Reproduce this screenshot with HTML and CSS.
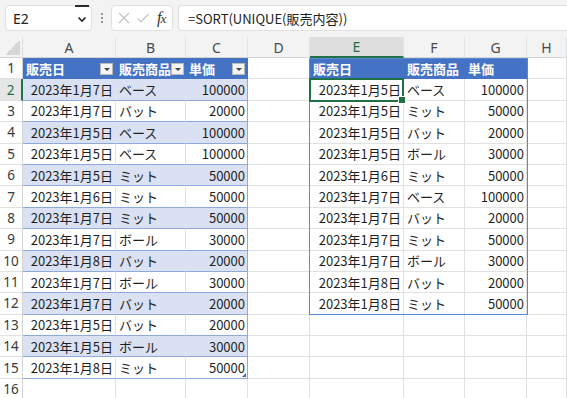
FILE: index.html
```html
<!DOCTYPE html>
<html lang="ja">
<head>
<meta charset="utf-8">
<title>Sheet</title>
<link rel="stylesheet" href="styles.css">
</head>
<body>
<div class="toolbar">
  <div class="namebox">
    <span class="nb-text">E2</span>
    <span class="nb-btn"><svg width="12" height="12" viewBox="0 0 12 12"><path d="M2.5 4.5 L6 8 L9.5 4.5" fill="none" stroke="#222" stroke-width="1.6"/></svg></span>
  </div>
  <div class="dots"><svg width="4" height="12" viewBox="0 0 4 12"><circle cx="2" cy="2" r="1" fill="#7a7a7a"/><circle cx="2" cy="6" r="1" fill="#7a7a7a"/><circle cx="2" cy="10" r="1" fill="#7a7a7a"/></svg></div>
  <div class="fxbox">
    <svg class="ico" width="14" height="14" viewBox="0 0 14 14"><path d="M2 2 L12 12 M12 2 L2 12" stroke="#c4c4c4" stroke-width="1.2"/></svg>
    <svg class="ico" width="14" height="14" viewBox="0 0 14 14"><path d="M1.5 7.5 L5 11 L12.5 3" fill="none" stroke="#c4c4c4" stroke-width="1.2"/></svg>
    <span class="fx">f<span class="fx-x">x</span></span>
  </div>
  <div class="formula">=SORT(UNIQUE(販売内容))</div>
</div>

<div class="sheet">
  <div class="corner"></div>
  <div class="ch">A</div><div class="ch">B</div><div class="ch">C</div><div class="ch">D</div><div class="ch sel">E</div><div class="ch">F</div><div class="ch">G</div><div class="ch">H</div>

  <div class="rh">1</div>
  <div class="c h"><span>販売日</span><span class="fb"></span></div>
  <div class="c h"><span>販売商品</span><span class="fb"></span></div>
  <div class="c h"><span>単価</span><span class="fb"></span></div>
  <div class="c"></div>
  <div class="c h">販売日</div><div class="c h">販売商品</div><div class="c h">単価</div><div class="c"></div>

  <div class="rh sel">2</div>
  <div class="c r b">2023年1月7日</div><div class="c b">ベース</div><div class="c r b e">100000</div><div class="c"></div>
  <div class="c r">2023年1月5日</div><div class="c">ベース</div><div class="c r">100000</div><div class="c"></div>

  <div class="rh">3</div>
  <div class="c r w">2023年1月7日</div><div class="c w">バット</div><div class="c r w e">20000</div><div class="c"></div>
  <div class="c r">2023年1月5日</div><div class="c">ミット</div><div class="c r">50000</div><div class="c"></div>

  <div class="rh">4</div>
  <div class="c r b">2023年1月5日</div><div class="c b">ベース</div><div class="c r b e">100000</div><div class="c"></div>
  <div class="c r">2023年1月5日</div><div class="c">バット</div><div class="c r">20000</div><div class="c"></div>

  <div class="rh">5</div>
  <div class="c r w">2023年1月5日</div><div class="c w">ベース</div><div class="c r w e">100000</div><div class="c"></div>
  <div class="c r">2023年1月5日</div><div class="c">ボール</div><div class="c r">30000</div><div class="c"></div>

  <div class="rh">6</div>
  <div class="c r b">2023年1月5日</div><div class="c b">ミット</div><div class="c r b e">50000</div><div class="c"></div>
  <div class="c r">2023年1月6日</div><div class="c">ミット</div><div class="c r">50000</div><div class="c"></div>

  <div class="rh">7</div>
  <div class="c r w">2023年1月6日</div><div class="c w">ミット</div><div class="c r w e">50000</div><div class="c"></div>
  <div class="c r">2023年1月7日</div><div class="c">ベース</div><div class="c r">100000</div><div class="c"></div>

  <div class="rh">8</div>
  <div class="c r b">2023年1月7日</div><div class="c b">ミット</div><div class="c r b e">50000</div><div class="c"></div>
  <div class="c r">2023年1月7日</div><div class="c">バット</div><div class="c r">20000</div><div class="c"></div>

  <div class="rh">9</div>
  <div class="c r w">2023年1月7日</div><div class="c w">ボール</div><div class="c r w e">30000</div><div class="c"></div>
  <div class="c r">2023年1月7日</div><div class="c">ミット</div><div class="c r">50000</div><div class="c"></div>

  <div class="rh">10</div>
  <div class="c r b">2023年1月8日</div><div class="c b">バット</div><div class="c r b e">20000</div><div class="c"></div>
  <div class="c r">2023年1月7日</div><div class="c">ボール</div><div class="c r">30000</div><div class="c"></div>

  <div class="rh">11</div>
  <div class="c r w">2023年1月7日</div><div class="c w">ボール</div><div class="c r w e">30000</div><div class="c"></div>
  <div class="c r">2023年1月8日</div><div class="c">バット</div><div class="c r">20000</div><div class="c"></div>

  <div class="rh">12</div>
  <div class="c r b">2023年1月7日</div><div class="c b">バット</div><div class="c r b e">20000</div><div class="c"></div>
  <div class="c r">2023年1月8日</div><div class="c">ミット</div><div class="c r">50000</div><div class="c"></div>

  <div class="rh">13</div>
  <div class="c r w">2023年1月5日</div><div class="c w">バット</div><div class="c r w e">20000</div><div class="c"></div>
  <div class="c"></div><div class="c"></div><div class="c"></div><div class="c"></div>

  <div class="rh">14</div>
  <div class="c r b">2023年1月5日</div><div class="c b">ボール</div><div class="c r b e">30000</div><div class="c"></div>
  <div class="c"></div><div class="c"></div><div class="c"></div><div class="c"></div>

  <div class="rh">15</div>
  <div class="c r w">2023年1月8日</div><div class="c w">ミット</div><div class="c r w e last">50000</div><div class="c"></div>
  <div class="c"></div><div class="c"></div><div class="c"></div><div class="c"></div>

  <div class="rh">16</div>
  <div class="c"></div><div class="c"></div><div class="c"></div><div class="c"></div>
  <div class="c"></div><div class="c"></div><div class="c"></div><div class="c"></div>

  <div class="spill"></div>
  <div class="cursor"></div>
</div>
</body>
</html>
```

FILE: styles.css
```css
* { box-sizing: border-box; }
html, body { margin: 0; padding: 0; }
body {
  width: 567px;
  height: 398px;
  overflow: hidden;
  background: #ffffff;
  font-family: "Noto Sans CJK JP", "Noto Sans", sans-serif;
  color: #1f1f1f;
}

/* toolbar */
.toolbar {
  height: 37px;
  background: #f3f3f3;
  display: flex;
  align-items: flex-start;
  padding: 5px 0 0 5px;
}
.namebox {
  width: 87px;
  height: 26px;
  background: #fff;
  border: 1px solid #e0e0e0;
  border-radius: 4px;
  display: flex;
  align-items: center;
  justify-content: space-between;
  padding: 0 2px 0 7px;
}
.nb-text {
  font-family: "Noto Sans", sans-serif;
  font-size: 14px;
  color: #222;
}
.nb-btn {
  width: 14px;
  height: 25px;
  display: flex;
  align-items: center;
  justify-content: center;
  border-top: 2px solid #2b2b2b;
  margin-top: -1px;
}
.dots {
  width: 19px;
  height: 26px;
  display: flex;
  align-items: center;
  justify-content: center;
}
.fxbox {
  width: 62px;
  height: 26px;
  background: #fff;
  border: 1px solid #e0e0e0;
  border-radius: 4px;
  display: flex;
  align-items: center;
  padding: 0 3px 0 5px;
  gap: 5px;
}
.fx {
  font-family: "Liberation Serif", serif;
  font-style: italic;
  font-size: 16px;
  color: #333;
  margin-left: 2px;
  letter-spacing: -1px;
}
.fx-x { font-size: 13px; }
.formula {
  flex: 1;
  height: 26px;
  margin-left: 5px;
  background: #fff;
  border: 1px solid #e0e0e0;
  border-right: none;
  border-radius: 4px 0 0 4px;
  display: flex;
  align-items: center;
  padding-left: 9px;
  font-size: 13px;
  color: #222;
}

/* sheet grid */
.sheet {
  position: relative;
  display: grid;
  grid-template-columns: 23px 93px 70px 62px 62px 94px 61px 62px 40px;
  grid-template-rows: 21px repeat(16, 21.4px);
}
.corner {
  background: #f3f3f3 linear-gradient(135deg, transparent 50%, #d6d6d6 50%) no-repeat right 2px bottom 2px / 15px 15px;
  border-right: 1px solid #dcdcdc;
  border-bottom: 1px solid #d4d4d4;
}
.ch {
  background: #f3f3f3;
  border-right: 1px solid #e2e2e2;
  border-bottom: 1px solid #d4d4d4;
  display: flex;
  align-items: center;
  justify-content: center;
  font-family: "Noto Sans", sans-serif;
  font-size: 14px;
  color: #4a4a4a;
}
.ch.sel {
  background: #dedede;
  color: #1e7145;
  border-bottom: 2px solid #1e7145;
}
.rh {
  background: #fff;
  border-right: 1px solid #d4d4d4;
  border-bottom: 1px solid #e1e1e1;
  display: flex;
  align-items: center;
  justify-content: center;
  font-family: "Noto Sans", sans-serif;
  font-size: 13.5px;
  color: #3a3a3a;
}
.rh.sel {
  background: #e6e6e6;
  color: #1e7145;
  border-right: 2px solid #1e7145;
}

.c {
  position: relative;
  border-right: 1px solid #e1e1e1;
  border-bottom: 1px solid #e1e1e1;
  display: flex;
  align-items: center;
  padding: 0 3px;
  font-size: 13px;
  white-space: nowrap;
  overflow: hidden;
}
.c.r { justify-content: flex-end; padding-right: 2px; }
.c.h {
  background: #4472c4;
  color: #fff;
  font-weight: 700;
  border-right-color: #4472c4;
  border-bottom-color: #4472c4;
}
.c.b {
  background: #d9e1f2;
  border-right-color: #d9e1f2;
  border-bottom-color: #8ea9db;
}
.c.w { border-bottom-color: #8ea9db; }
.c.e { border-right-color: #8ea9db; }
.c.last { overflow: visible; }
.c.last::after {
  content: "";
  position: absolute;
  right: 1px;
  bottom: 1px;
  width: 0;
  height: 0;
  border-left: 4px solid transparent;
  border-bottom: 4px solid #3b66b8;
}

.fb {
  margin-left: auto;
  width: 13px;
  height: 12px;
  margin-top: 2px;
  margin-right: -1px;
  background: #f4f4f4;
  border: 1px solid #b9b9b9;
  display: flex;
  align-items: center;
  justify-content: center;
  flex-shrink: 0;
}
.fb::before {
  content: "";
  width: 0;
  height: 0;
  border-left: 3px solid transparent;
  border-right: 3px solid transparent;
  border-top: 3px solid #444;
}

/* overlays placed on grid areas */
.spill {
  position: absolute;
  grid-column: 6 / 9;
  grid-row: 2 / 14;
  top: 0;
  bottom: 0;
  left: -1px;
  right: -1px;
  border: 1px solid #5a8ad6;
  pointer-events: none;
}
.cursor {
  position: absolute;
  grid-column: 6 / 7;
  grid-row: 3 / 4;
  top: -1px;
  bottom: -1px;
  left: -1px;
  right: 0;
  border: 2px solid #1e7145;
  pointer-events: none;
}
.cursor::after {
  content: "";
  position: absolute;
  right: -4px;
  bottom: -4px;
  width: 6px;
  height: 6px;
  background: #1e7145;
  border: 1px solid #fff;
}
```
